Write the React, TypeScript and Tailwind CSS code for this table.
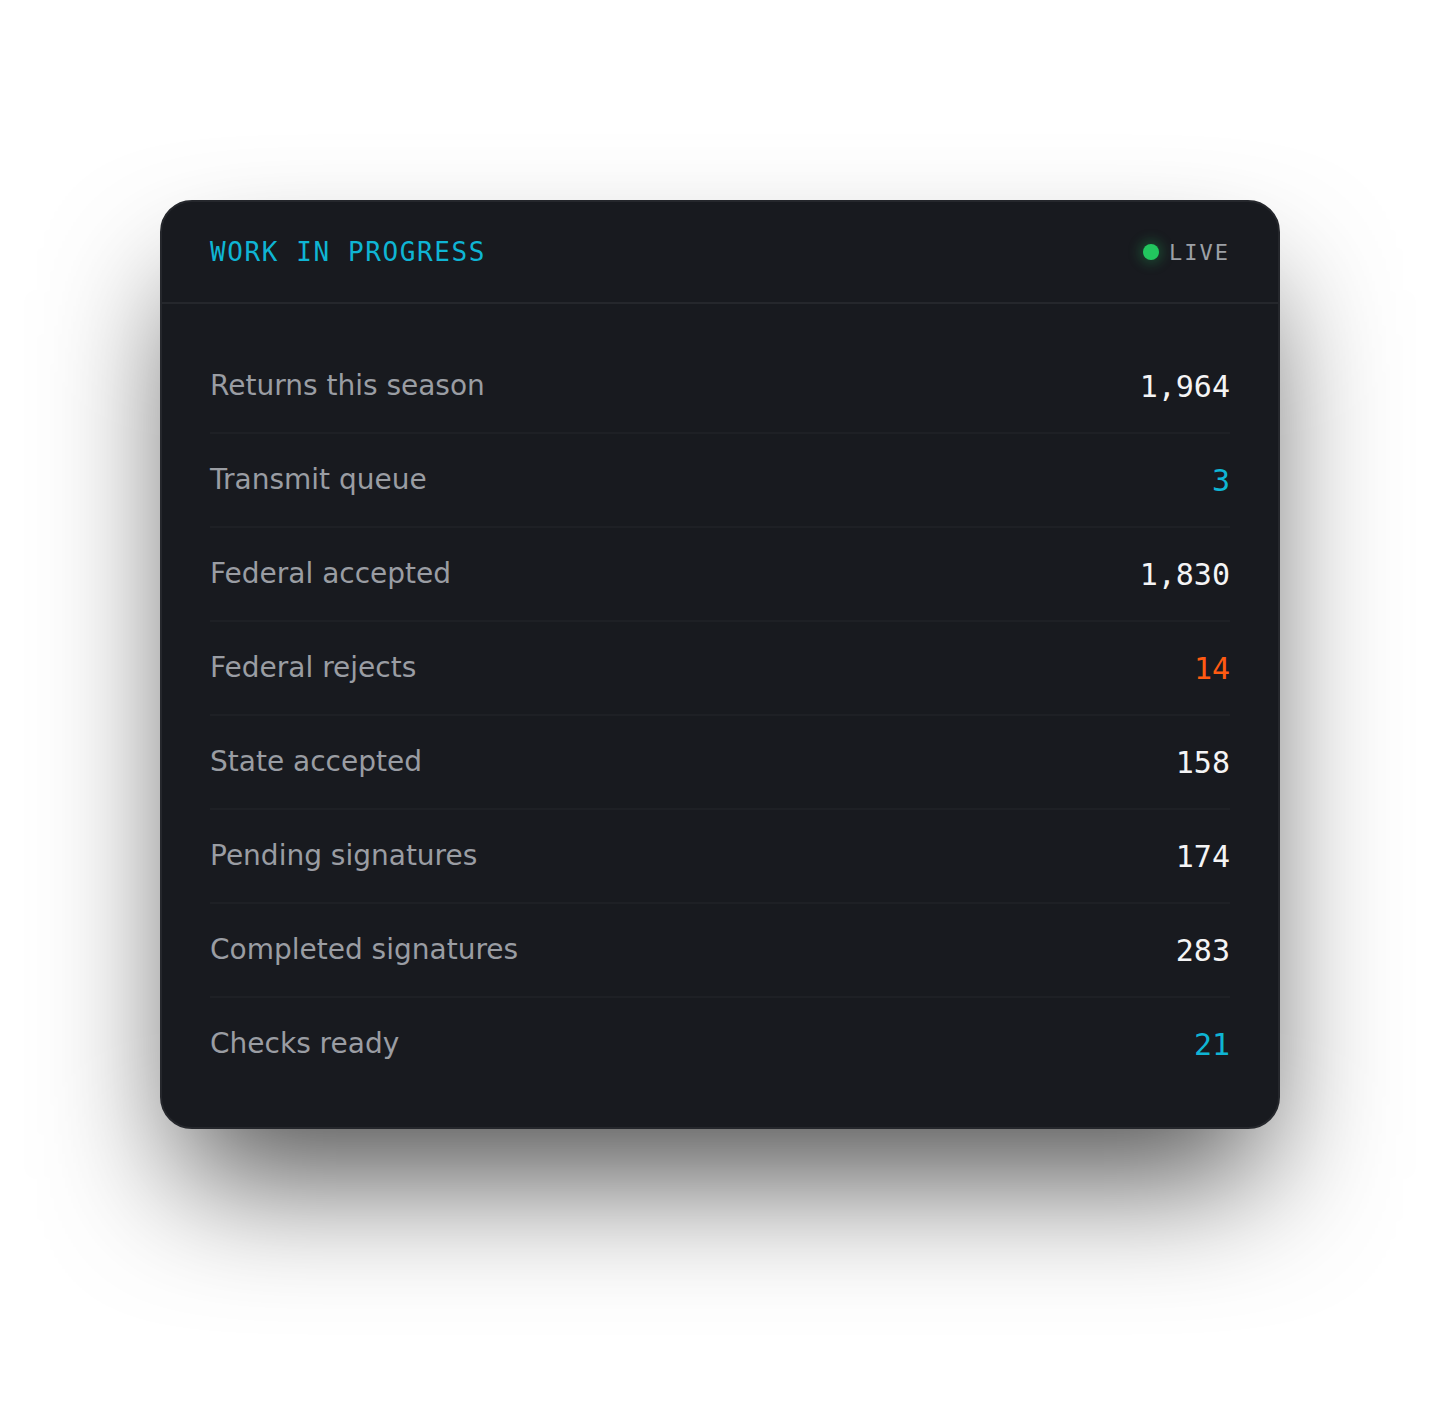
const rows = [
  { label: "Returns this season", value: "1,964", tone: "text-[#f4f4f5]" },
  { label: "Transmit queue", value: "3", tone: "text-[#0fb5d4]" },
  { label: "Federal accepted", value: "1,830", tone: "text-[#f4f4f5]" },
  { label: "Federal rejects", value: "14", tone: "text-[#ff5a12]" },
  { label: "State accepted", value: "158", tone: "text-[#f4f4f5]" },
  { label: "Pending signatures", value: "174", tone: "text-[#f4f4f5]" },
  { label: "Completed signatures", value: "283", tone: "text-[#f4f4f5]" },
  { label: "Checks ready", value: "21", tone: "text-[#0fb5d4]" },
]

export default function App() {
  return (
    <div className="min-h-[1424px] bg-white px-[160px] pt-[200px]">
      <div className="rounded-[32px] border-2 border-[#25272c] bg-[#181a1f] shadow-[0_70px_130px_-20px_rgba(0,0,0,0.68)]">
        <div className="flex h-[102px] items-center justify-between border-b-2 border-[#25272c] px-[48px]">
          <h2 className="font-['DejaVu_Sans_Mono',monospace] text-[26px] tracking-[1.6px] text-[#0fb5d4]">
            WORK IN PROGRESS
          </h2>
          <div className="flex items-center gap-[10px]">
            <span className="h-[16px] w-[16px] rounded-full bg-[#22c55e] shadow-[0_0_12px_4px_rgba(34,197,94,0.25)]" />
            <span className="font-['DejaVu_Sans_Mono',monospace] text-[22px] tracking-[2px] text-[#9ca0a6]">
              LIVE
            </span>
          </div>
        </div>

        <div className="px-[48px] pt-[36px] pb-[37px]">
          {rows.map((row, i) => (
            <div
              key={row.label}
              className={
                i < rows.length - 1
                  ? "flex h-[94px] items-center justify-between border-b-2 border-[#1e2025]"
                  : "flex h-[92px] items-center justify-between"
              }
            >
              <span className="font-['DejaVu_Sans',sans-serif] text-[28px] text-[#9a9da3]">{row.label}</span>
              <span className={`font-['DejaVu_Sans_Mono',monospace] text-[30px] ${row.tone}`}>{row.value}</span>
            </div>
          ))}
        </div>
      </div>
    </div>
  )
}
